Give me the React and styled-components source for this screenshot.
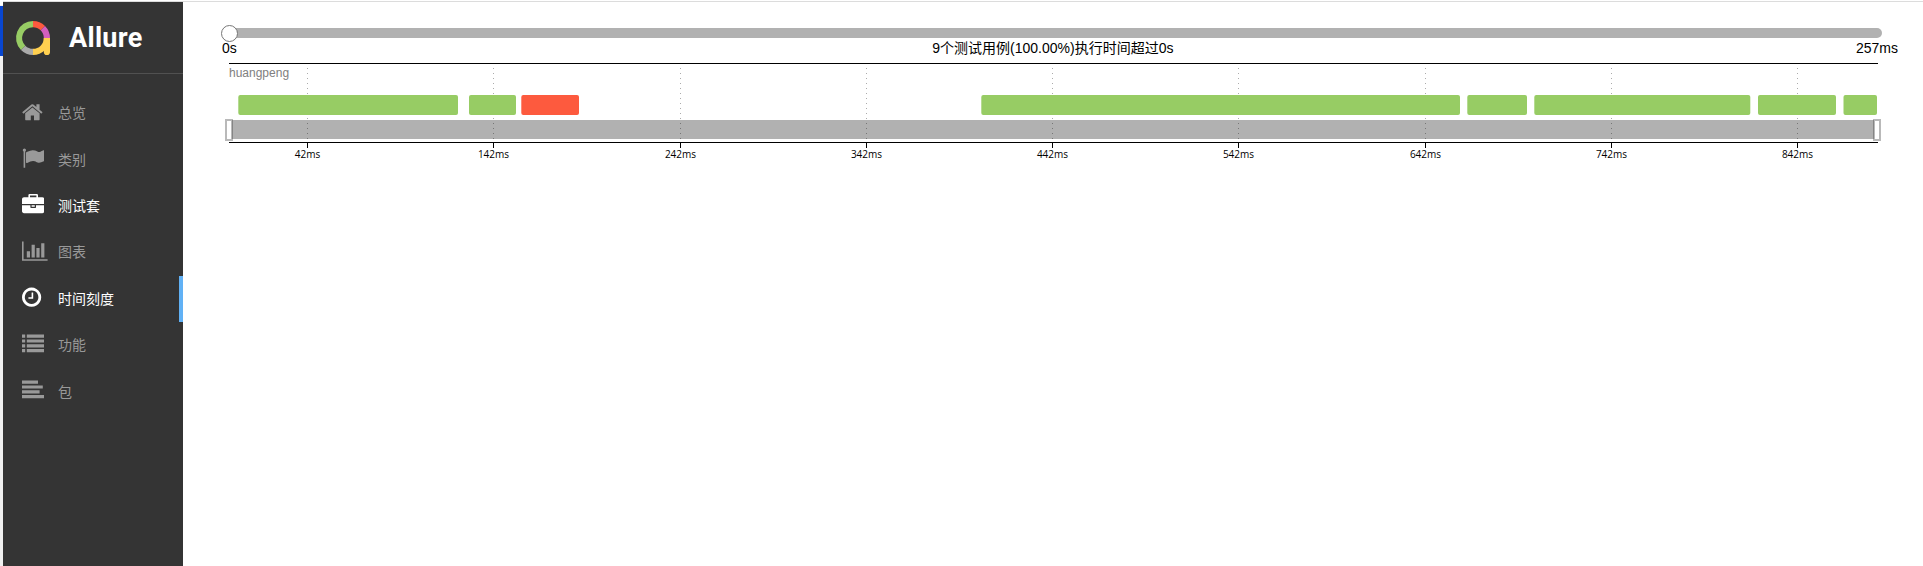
import React from "react";
import styled, { createGlobalStyle } from "styled-components";

const GlobalStyle = createGlobalStyle`
  * { box-sizing: border-box; }
  body { margin: 0; background: #fff; overflow: hidden; }
`;

const sans = `"Liberation Sans", "Noto Sans CJK SC", sans-serif`;

const Page = styled.div`
  display: flex;
  height: 566px;
  font-family: ${sans};
  background: linear-gradient(#fff 1px, #dcdcdc 1px, #dcdcdc 2px, #fff 2px);
`;

const Gutter = styled.div`
  flex: none;
  width: 3px;
  padding-top: 6px;
  background: linear-gradient(#fff 5px, #f0f0f0 5px);
`;

const GutterMark = styled.div`
  height: 50px;
  background: #0846d0;
`;

const Sidebar = styled.aside`
  flex: none;
  width: 180px;
  margin-top: 2px;
  background: #343434;
`;

const Brand = styled.header`
  display: flex;
  align-items: center;
  height: 72px;
  padding: 0 0 0 13px;
  border-bottom: 1px solid #515151;
`;

const BrandName = styled.span`
  margin: 1px 0 0 19px;
  color: #fff;
  font: bold 27px/32px Roboto, sans-serif;
  letter-spacing: 0.3px;
`;

const Menu = styled.nav`
  padding-top: 16.3px;
`;

const MenuItem = styled.a`
  display: flex;
  align-items: center;
  height: 46.4px;
  padding-left: 19px;
  border-right: 4px solid ${(p) => (p.$selected ? "#61b1f5" : "transparent")};
  color: ${(p) => (p.$bright ? "#fff" : "#999")};
`;

const IconSlot = styled.span`
  display: flex;
  width: 36px;
  padding-bottom: 3px;
`;

const Label = styled.span`
  padding-bottom: 2.4px;
  font: 14px/20px "Noto Sans CJK SC", sans-serif;
`;

const Content = styled.main`
  flex: 1;
  min-width: 0;
  padding: 24px 41px 0 46px;
`;

const Slider = styled.div`
  display: flex;
  align-items: center;
  height: 18px;
`;

const Knob = styled.div`
  width: 17px;
  height: 17px;
  margin-left: -8.5px;
  border: 1px solid #777;
  border-radius: 50%;
  background: #fff;
  z-index: 1;
`;

const Track = styled.div`
  flex: 1;
  height: 10px;
  margin-left: -8px;
  border-radius: 5px;
  background: #b1b1b1;
`;

const SliderLabels = styled.div`
  display: flex;
  justify-content: space-between;
  height: 20px;
  margin: 0 -16px 0 -7px;
  color: #000;
  font-size: 14px;
  line-height: 13px;
`;

const Summary = styled.span`
  margin-left: 13px;
`;

const Chart = styled.svg`
  display: block;
  margin: 0 0 0 -6px;
`;

const AxisLabel = styled.text`
  font: 10px "Open Sans", sans-serif;
  text-anchor: middle;
`;

const HostLabel = styled.text`
  font: 12px ${sans};
  fill: #808080;
`;

const icons = {
  home: ["64 0 1792 1792", "M1472 992v480q0 26-19 45t-45 19h-384v-384h-256v384h-384q-26 0-45-19t-19-45v-480q0-1 .5-3t.5-3l575-474 575 474q1 2 1 6zm223-69l-62 74q-8 9-21 11h-3q-13 0-21-7l-692-577-692 577q-12 8-24 7-13-2-21-11l-62-74q-8-10-7-23.5t11-21.5l719-599q32-26 76-26t76 26l244 204v-195q0-14 9-23t23-9h192q14 0 23 9t9 23v408l219 182q10 8 11 21.5t-7 23.5z"],
  flag: ["0 0 1792 1792", "M320 256q0 72-64 110v1266q0 13-9.5 22.5t-22.5 9.5h-64q-13 0-22.5-9.5t-9.5-22.5v-1266q-64-38-64-110 0-53 37.5-90.5t90.5-37.5 90.5 37.5 37.5 90.5zm1472 64v763q0 25-12.5 38.5t-39.5 27.5q-215 116-369 116-61 0-123.5-22t-108.5-48-115.5-48-142.5-22q-192 0-464 146-17 9-33 9-26 0-45-19t-19-45v-742q0-32 31-55 21-14 79-43 236-120 421-120 107 0 200 29t219 88q38 19 88 19 54 0 117.5-21t110-47 88-47 54.5-21q26 0 45 19t19 45z"],
  briefcase: ["0 0 1792 1792", "M640 256h512v-128h-512v128zm1152 640v480q0 66-47 113t-113 47h-1472q-66 0-113-47t-47-113v-480h672v160q0 26 19 45t45 19h320q26 0 45-19t19-45v-160h672zm-768 0v128h-256v-128h256zm768-480v384h-1792v-384q0-66 47-113t113-47h352v-160q0-40 28-68t68-28h576q40 0 68 28t28 68v160h352q66 0 113 47t47 113z"],
  chart: ["0 0 2048 1792", "M640 896v512h-256v-512h256zm384-512v1024h-256v-1024h256zm1024 1152v128h-2048v-1536h128v1408h1920zm-640-896v768h-256v-768h256zm384-384v1152h-256v-1152h256z"],
  clock: ["128 0 1792 1792", "M1024 544v448q0 14-9 23t-23 9h-320q-14 0-23-9t-9-23v-64q0-14 9-23t23-9h224v-352q0-14 9-23t23-9h64q14 0 23 9t9 23zm416 352q0-148-73-273t-198-198-273-73-273 73-198 198-73 273 73 273 198 198 273 73 273-73 198-198 73-273zm224 0q0 209-103 385.5t-279.5 279.5-385.5 103-385.5-103-279.5-279.5-103-385.5 103-385.5 279.5-279.5 385.5-103 385.5 103 279.5 279.5 103 385.5z"],
  list: ["0 0 1792 1792", [128, 512, 896, 1280].map((y) => `M0 ${y}h256v256H0zM384 ${y}h1408v256H384z`).join("")],
  align: ["0 0 1792 1792", [[128, 1280], [512, 1664], [896, 1408], [1280, 1792]].map(([y, w]) => `M0 ${y}h${w}v256H0z`).join("")],
};

const Icon = ({ name }) => {
  const [viewBox, d] = icons[name];
  return (
    <svg width={name === "chart" ? 25.6 : 22.4} height="22.4" viewBox={viewBox} fill="currentColor">
      <path d={d} />
    </svg>
  );
};

const Logo = () => (
  <svg width="34" height="34" viewBox="-17 -17 34 34" fill="none" strokeWidth="6.2" overflow="visible">
    <path d="M-9.83 9.83A13.9 13.9 0 0 1 0 -13.9" stroke="#97cc64" />
    <path d="M0 -13.9A13.9 13.9 0 0 1 9.83 -9.83" stroke="#fd5a3e" />
    <path d="M9.83 -9.83A13.9 13.9 0 0 1 13.9 0" stroke="#d35ebe" />
    <path d="M0 13.9A13.9 13.9 0 0 1 -9.83 9.83" stroke="#aaa" />
    <path d="M13.9 0A13.9 13.9 0 0 1 0 13.9" stroke="#ffd050" />
    <path d="M10.8 0H17V13.9a3.1 3.1 0 0 1-6.2 0z" fill="#ffd050" />
  </svg>
);

const menu = [
  { icon: "home", label: "总览" },
  { icon: "flag", label: "类别" },
  { icon: "briefcase", label: "测试套", bright: true },
  { icon: "chart", label: "图表" },
  { icon: "clock", label: "时间刻度", bright: true, selected: true },
  { icon: "list", label: "功能" },
  { icon: "align", label: "包" },
];

const tests = [
  { x: 15.3, width: 219.7 },
  { x: 246, width: 47 },
  { x: 298.3, width: 57.7, failed: true },
  { x: 758.3, width: 478.7 },
  { x: 1244.3, width: 59.7 },
  { x: 1311.3, width: 216 },
  { x: 1535, width: 78 },
  { x: 1620.5, width: 33.5 },
];

const ticks = Array.from({ length: 9 }, (_, i) => ({
  x: 84.5 + Math.round(i * 186.25),
  label: `${42 + i * 100}ms`,
}));

const Timeline = () => (
  <Chart width="1666" height="106" viewBox="0 0 1666 106">
    <path d="M6 1.5H1655M6 80.5H1655" stroke="#000" />
    <HostLabel x="6" y="15">huangpeng</HostLabel>
    <rect x="8" y="58" width="1643" height="19" fill="#b1b1b1" />
    {ticks.map(({ x, label }) => (
      <g key={label}>
        <path d={`M${x} 6V77`} stroke="#000" strokeOpacity=".33" strokeDasharray="1 4" />
        <path d={`M${x} 81V86`} stroke="#000" />
        <AxisLabel x={x} y="96">{label}</AxisLabel>
      </g>
    ))}
    {tests.map(({ x, width, failed }) => (
      <rect key={x} x={x} y="33" width={width} height="20" rx="2" fill={failed ? "#fd5a3e" : "#97cc64"} />
    ))}
    {[3, 1651].map((x) => (
      <g key={x}>
        <rect x={x} y="58" width="6" height="20" fill="#fff" stroke="#b9b9b9" strokeWidth="2" />
        <path d={x === 3 ? "M9.5 58V77" : "M1650.5 58V77"} stroke="#858585" />
      </g>
    ))}
  </Chart>
);

export default function App() {
  return (
    <Page>
      <GlobalStyle />
      <Gutter>
        <GutterMark />
      </Gutter>
      <Sidebar>
        <Brand>
          <Logo />
          <BrandName>Allure</BrandName>
        </Brand>
        <Menu>
          {menu.map(({ icon, label, bright, selected }) => (
            <MenuItem key={icon} $bright={bright} $selected={selected}>
              <IconSlot>
                <Icon name={icon} />
              </IconSlot>
              <Label>{label}</Label>
            </MenuItem>
          ))}
        </Menu>
      </Sidebar>
      <Content>
        <Slider>
          <Knob />
          <Track />
        </Slider>
        <SliderLabels>
          <span>0s</span>
          <Summary>9个测试用例(100.00%)执行时间超过0s</Summary>
          <span>257ms</span>
        </SliderLabels>
        <Timeline />
      </Content>
    </Page>
  );
}
